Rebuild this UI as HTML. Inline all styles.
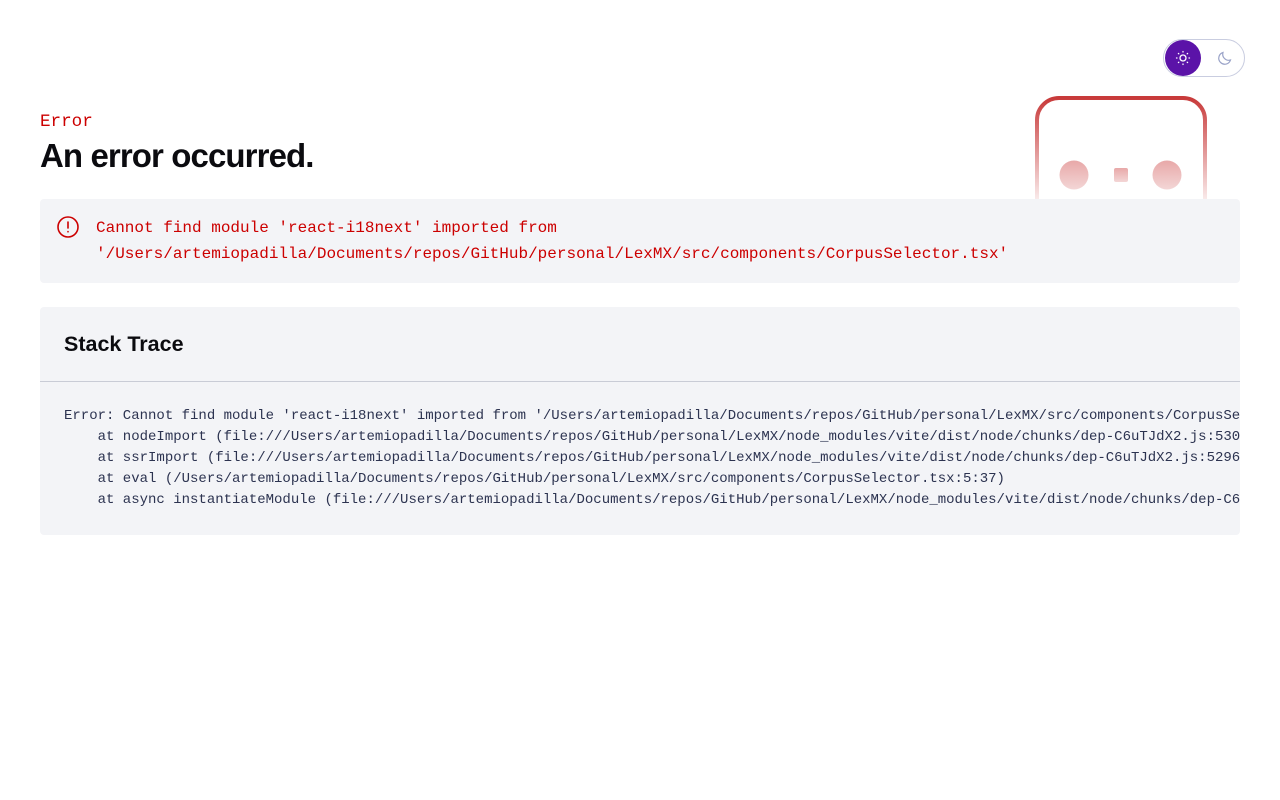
<!DOCTYPE html>
<html><head><meta charset="utf-8"><style>
body{margin:0;background:#fff;font-family:"Liberation Sans",sans-serif;width:1280px;height:800px;overflow:hidden;position:relative}
.mono{font-family:"Liberation Mono",monospace}
.toggle{position:absolute;left:1163px;top:39px;width:80px;height:36px;border:1px solid #c9cde0;border-radius:20px;box-sizing:content-box}
.knob{position:absolute;left:1px;top:0;width:36px;height:36px;border-radius:50%;background:#5b13a8}
.err{position:absolute;left:40px;top:112px;color:#c00;font-size:17.6px}
h1{position:absolute;left:40px;top:137px;margin:0;font-size:33px;font-weight:bold;color:#0b0b0f;letter-spacing:-0.9px}
.box{position:absolute;left:40px;top:199px;width:1200px;height:84px;background:#f3f4f7;border-radius:4px}
.msg{position:absolute;left:56px;top:215px;color:#c00;font-size:16px;line-height:26px}
.st{position:absolute;left:40px;top:307px;width:1200px;height:228px;background:#f3f4f7;border-radius:4px;overflow:hidden}
.st h2{margin:0;position:absolute;left:24px;top:25px;font-size:21.5px;font-weight:bold;color:#0b0b0f}
.st hr{position:absolute;top:74px;left:0;width:1200px;margin:0;border:0;border-top:1px solid #c9ccd6}
.st pre{position:absolute;left:24px;top:99px;margin:0;font-size:14px;line-height:21px;color:#2c3350;white-space:pre}
</style></head><body>
<svg style="position:absolute;left:1030px;top:92px" width="184" height="108">
<defs><linearGradient id="g" x1="0" y1="0" x2="0" y2="1"><stop offset="0" stop-color="#c83a3a"/><stop offset="1" stop-color="#c83a3a" stop-opacity="0.1"/></linearGradient>
<linearGradient id="g2" x1="0" y1="0" x2="0" y2="1"><stop offset="0" stop-color="#e8a8a8"/><stop offset="1" stop-color="#f3d6d6"/></linearGradient></defs>
<path d="M7 108 V28 A22 22 0 0 1 29 6 H153 A22 22 0 0 1 175 28 V108" fill="none" stroke="url(#g)" stroke-width="4"/>
<circle cx="44" cy="83" r="14.5" fill="url(#g2)"/><circle cx="137" cy="83" r="14.5" fill="url(#g2)"/>
<rect x="84" y="76" width="14" height="14" rx="2" fill="url(#g2)"/>
</svg>
<div class="toggle"><div class="knob"></div>
<svg style="position:absolute;left:11px;top:10px" width="16" height="16" viewBox="0 0 16 16" stroke="#fff" fill="none" stroke-width="1.3" stroke-linecap="round"><circle cx="8" cy="8" r="3"/><path d="M8 1.5v.5M8 14v.5M1.5 8h.5M14 8h.5M3.4 3.4l.4.4M12.2 12.2l.4.4M3.4 12.6l.4-.4M12.2 3.8l.4-.4"/></svg>
<svg style="position:absolute;left:53px;top:10px" width="16" height="16" viewBox="0 0 16 16" fill="none" stroke="#9aa3c8" stroke-width="1.2"><path d="M13.5 10A6 6 0 0 1 6 2.5 6 6 0 1 0 13.5 10z"/></svg>
</div>
<div class="err mono">Error</div>
<h1>An error occurred.</h1>
<div class="box"></div>
<svg style="position:absolute;left:56px;top:215px" width="24" height="24" viewBox="0 0 24 24" fill="none" stroke="#c00" stroke-width="1.6" stroke-linecap="round"><circle cx="12" cy="12" r="10"/><path d="M12 7v6M12 16.5v.3"/></svg>
<div class="msg mono" style="left:96px">Cannot find module 'react-i18next' imported from<br>'/Users/artemiopadilla/Documents/repos/GitHub/personal/LexMX/src/components/CorpusSelector.tsx'</div>
<div class="st"><h2>Stack Trace</h2><hr>
<pre class="mono">Error: Cannot find module 'react-i18next' imported from '/Users/artemiopadilla/Documents/repos/GitHub/personal/LexMX/src/components/CorpusSelector.tsx'
    at nodeImport (file:///Users/artemiopadilla/Documents/repos/GitHub/personal/LexMX/node_modules/vite/dist/node/chunks/dep-C6uTJdX2.js:53012:19)
    at ssrImport (file:///Users/artemiopadilla/Documents/repos/GitHub/personal/LexMX/node_modules/vite/dist/node/chunks/dep-C6uTJdX2.js:52962:22)
    at eval (/Users/artemiopadilla/Documents/repos/GitHub/personal/LexMX/src/components/CorpusSelector.tsx:5:37)
    at async instantiateModule (file:///Users/artemiopadilla/Documents/repos/GitHub/personal/LexMX/node_modules/vite/dist/node/chunks/dep-C6uTJdX2.js:53020:5)</pre>
</div>
</body></html>
